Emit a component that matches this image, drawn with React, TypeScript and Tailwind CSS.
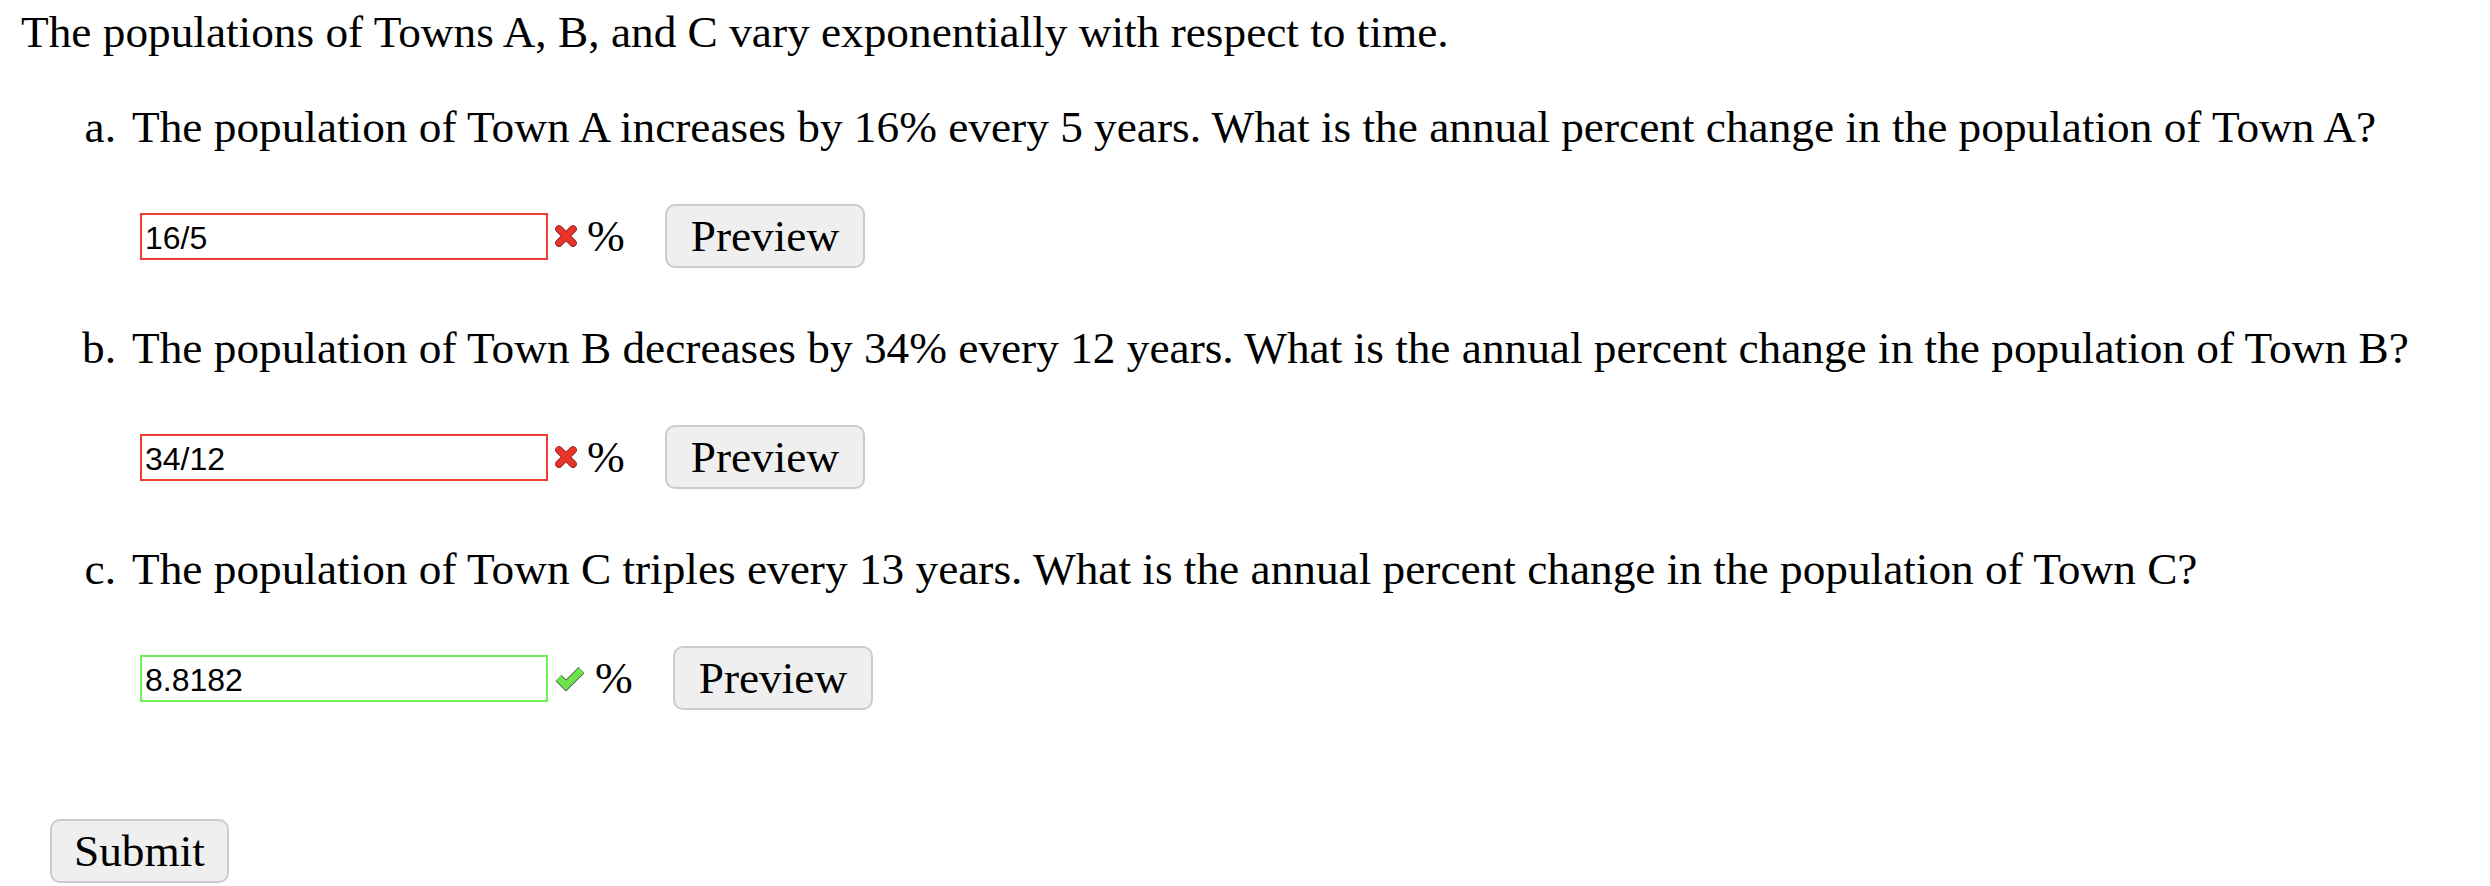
import React from 'react';

type Status = 'wrong' | 'right';

interface Part {
  label: string;
  question: string;
  answer: string;
  status: Status;
}

const parts: Part[] = [
  {
    label: 'a.',
    question: 'The population of Town A increases by 16% every 5 years. What is the annual percent change in the population of Town A?',
    answer: '16/5',
    status: 'wrong',
  },
  {
    label: 'b.',
    question: 'The population of Town B decreases by 34% every 12 years. What is the annual percent change in the population of Town B?',
    answer: '34/12',
    status: 'wrong',
  },
  {
    label: 'c.',
    question: 'The population of Town C triples every 13 years. What is the annual percent change in the population of Town C?',
    answer: '8.8182',
    status: 'right',
  },
];

function WrongIcon() {
  return (
    <svg width="22" height="22" viewBox="0 0 22 22" className="shrink-0">
      <g strokeLinecap="round">
        <path d="M4 4 L18 18 M18 4 L4 18" stroke="#8a2a24" strokeWidth="7.6" />
        <path d="M4 4 L18 18 M18 4 L4 18" stroke="#ec3329" strokeWidth="6" />
      </g>
    </svg>
  );
}

function RightIcon() {
  return (
    <svg width="30" height="28" viewBox="0 0 30 28" className="shrink-0">
      <path d="M3.5 14 L11 21.5 L26.5 6" fill="none" stroke="#3d5a34" strokeWidth="8.4" />
      <path d="M3.5 14 L11 21.5 L26.5 6" fill="none" stroke="#6ce24c" strokeWidth="6.8" />
    </svg>
  );
}

function GrayButton({ children }: { children: React.ReactNode }) {
  return (
    <button
      type="button"
      className="h-[64px] px-[24px] rounded-[10px] border-2 border-[#cbcbcb] bg-[#efefef] text-black text-[45.3px] leading-[52px] font-['Liberation_Serif',serif]"
    >
      {children}
    </button>
  );
}

function AnswerRow({ part }: { part: Part }) {
  const isRight = part.status === 'right';
  return (
    <div className="flex items-center h-[64px] pl-[140px]">
      <input
        readOnly
        value={part.answer}
        className={
          "w-[408px] h-[47px] border-2 px-[3px] pt-[4px] text-[32px] text-black outline-none bg-white font-['Liberation_Sans',Arial,sans-serif] " +
          (isRight ? 'border-[#6cf052]' : 'border-[#ee3d31]')
        }
      />
      <span className="ml-[7px] flex items-center">
        {isRight ? <RightIcon /> : <WrongIcon />}
      </span>
      <span className="ml-[10px] text-[45.3px] leading-[52px]">%</span>
      <span className="ml-[40px]">
        <GrayButton>Preview</GrayButton>
      </span>
    </div>
  );
}

export default function App() {
  return (
    <div className="w-[2490px] h-[886px] overflow-hidden bg-white text-black font-['Liberation_Serif','Times_New_Roman',serif] text-[45.3px] leading-[52px]">
      <div className="pl-[21px] pt-[6px]">
        The populations of Towns A, B, and C vary exponentially with respect to time.
      </div>

      <div className="mt-[43px]">
        {parts.map((part, i) => (
          <div key={part.label} className={i > 0 ? 'mt-[54px]' : ''}>
            <div className="flex">
              <span className="w-[132px] shrink-0 text-right pr-[16px]">{part.label}</span>
              <span className="whitespace-nowrap">{part.question}</span>
            </div>
            <div className="mt-[51px]">
              <AnswerRow part={part} />
            </div>
          </div>
        ))}
      </div>

      <div className="mt-[109px] pl-[50px]">
        <button
          type="button"
          className="h-[64px] px-[22px] rounded-[10px] border-2 border-[#cbcbcb] bg-[#efefef] text-black text-[45.3px] leading-[52px]"
        >
          Submit
        </button>
      </div>
    </div>
  );
}
